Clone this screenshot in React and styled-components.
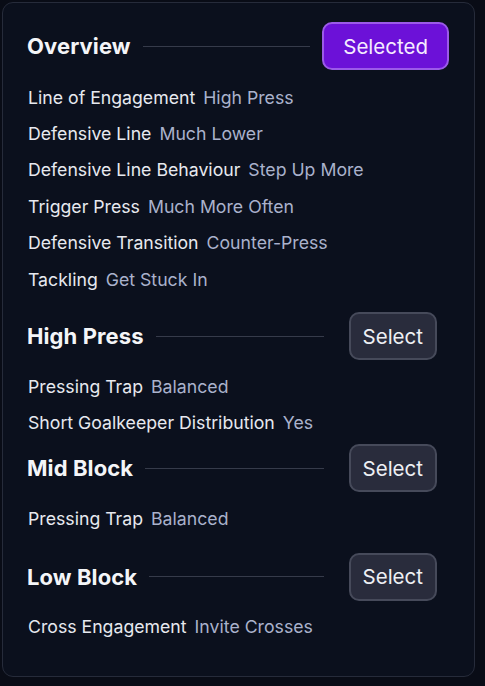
import React from 'react';
import styled, { createGlobalStyle } from 'styled-components';

const GlobalStyle = createGlobalStyle`
  html, body {
    margin: 0;
    padding: 0;
    background: #090c16;
  }
  body {
    font-family: Inter, "Noto Sans", "Liberation Sans", sans-serif;
    -webkit-font-smoothing: antialiased;
  }
`;

const Card = styled.div`
  margin: 2px;
  width: 473px;
  box-sizing: border-box;
  background: #0b101d;
  border: 1.5px solid #262b3a;
  border-radius: 11px;
  padding: 19px 25px 31px 24px;
`;

const Section = styled.section`
  padding-right: ${(p) => (p.$wide ? '0' : '12px')};
  margin-bottom: ${(p) => p.$space}px;
`;

const Header = styled.div`
  display: flex;
  align-items: center;
  height: 48px;
`;

const Title = styled.h3`
  margin: 0;
  font-size: 22px;
  font-weight: 700;
  letter-spacing: 0.1px;
  color: #f4f5f8;
  white-space: nowrap;
`;

const Rule = styled.div`
  flex: 1;
  height: 1px;
  background: #363b4a;
  margin: 0 ${(p) => (p.$wide ? 12 : 25)}px 0 12px;
`;

const Button = styled.button`
  height: 48px;
  box-sizing: border-box;
  border-radius: 10px;
  font-family: inherit;
  font-size: 20.5px;
  font-weight: 400;
  padding: 0 ${(p) => (p.$selected ? 19 : 12)}px;
  background: ${(p) => (p.$selected ? '#6c11d8' : '#292c3c')};
  border: 2px solid ${(p) => (p.$selected ? '#9c5ae9' : '#464a5a')};
  color: ${(p) => (p.$selected ? '#f5ecff' : '#eef0f4')};
  cursor: pointer;
`;

const Rows = styled.div`
  margin-top: ${(p) => p.$top}px;
`;

const Row = styled.div`
  display: flex;
  align-items: center;
  height: 36.4px;
  padding-left: 1px;
  font-size: 17.7px;
  white-space: nowrap;
`;

const Label = styled.span`
  color: #e7e9ef;
`;

const Value = styled.span`
  color: #aab2cc;
  margin-left: 8px;
`;

const sections = [
  {
    title: 'Overview',
    selected: true,
    space: 15,
    top: 9,
    rows: [
      ['Line of Engagement', 'High Press'],
      ['Defensive Line', 'Much Lower'],
      ['Defensive Line Behaviour', 'Step Up More'],
      ['Trigger Press', 'Much More Often'],
      ['Defensive Transition', 'Counter-Press'],
      ['Tackling', 'Get Stuck In'],
    ],
  },
  {
    title: 'High Press',
    space: 3,
    top: 8,
    rows: [
      ['Pressing Trap', 'Balanced'],
      ['Short Goalkeeper Distribution', 'Yes'],
    ],
  },
  {
    title: 'Mid Block',
    space: 16,
    top: 8,
    rows: [['Pressing Trap', 'Balanced']],
  },
  {
    title: 'Low Block',
    space: 0,
    top: 8,
    rows: [['Cross Engagement', 'Invite Crosses']],
  },
];

export default function App() {
  return (
    <>
      <GlobalStyle />
      <Card>
        {sections.map((s) => (
          <Section key={s.title} $wide={s.selected} $space={s.space}>
            <Header>
              <Title>{s.title}</Title>
              <Rule $wide={s.selected} />
              <Button $selected={s.selected}>{s.selected ? 'Selected' : 'Select'}</Button>
            </Header>
            <Rows $top={s.top}>
              {s.rows.map(([label, value]) => (
                <Row key={label}>
                  <Label>{label}</Label>
                  <Value>{value}</Value>
                </Row>
              ))}
            </Rows>
          </Section>
        ))}
      </Card>
    </>
  );
}
